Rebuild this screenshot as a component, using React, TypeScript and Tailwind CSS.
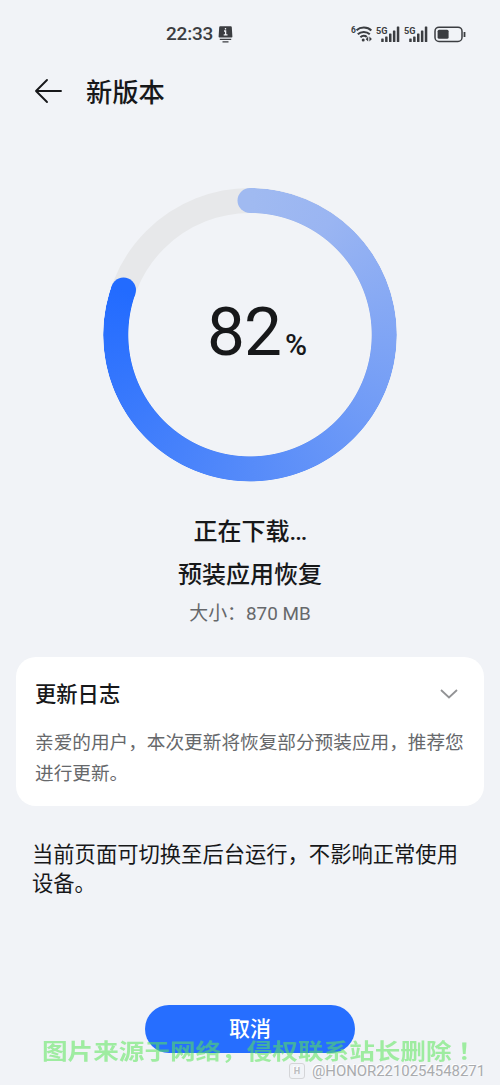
import React from "react";

const PROGRESS = 82;

function ProgressRing() {
  return (
    <div className="grid col-start-1 row-start-1 w-[294px] h-[294px]">
      <svg className="col-start-1 row-start-1 w-[294px] h-[294px]" viewBox="0 0 294 294" fill="none">
        <circle cx="147" cy="146.7" r="134.2" stroke="#e7e8ea" strokeWidth="25" />
      </svg>
      <div className="col-start-1 row-start-1 w-[294px] h-[294px] rounded-full bg-[conic-gradient(#a0baf1_0deg,#9ab5f2_35deg,#226bff_289.5deg,transparent_289.6deg)] [mask:radial-gradient(circle_at_147px_146.7px,transparent_121.3px,#000_122.1px,#000_146.3px,transparent_147.1px)]" />
      <svg className="col-start-1 row-start-1 w-[294px] h-[294px]" viewBox="0 0 294 294" fill="none">
        <circle cx="147" cy="12.5" r="12.5" fill="#a0baf1" />
        <circle cx="20.5" cy="102" r="12.5" fill="#226bff" />
      </svg>
    </div>
  );
}

function Signal() {
  return (
    <svg className="w-6 h-[17px]" viewBox="0 0 24 17" fill="#3b3d41">
      <text x="0" y="8" fontSize="9.8" fontWeight="700" fontFamily="Roboto, sans-serif" textLength="11.5" lengthAdjust="spacingAndGlyphs">5G</text>
      <rect x="5.2" y="12.5" width="2.5" height="3.5" rx="0.6" />
      <rect x="9.1" y="10.5" width="2.5" height="5.5" rx="0.6" />
      <rect x="13" y="7.5" width="2.5" height="8.5" rx="0.6" />
      <rect x="16.9" y="4.5" width="2.5" height="11.5" rx="0.6" />
      <rect x="20.8" y="0.5" width="2.5" height="15.5" rx="0.6" />
    </svg>
  );
}

function StatusBar() {
  return (
    <div className="h-[68px] pl-[166px] pr-[33px] flex items-center text-[#3b3d41]">
      <span className="font-[Roboto] font-medium text-[19px] leading-6 tracking-[-0.2px] pb-px">22:33</span>
      <svg className="w-[15px] h-[17px] ml-[5px]" viewBox="0 0 15 17" fill="none">
        <path d="M2.2 0.3h10.6a1 1 0 0 1 1 .9l.6 9.5a.8.8 0 0 1-.8.8H1.4a.8.8 0 0 1-.8-.8l.6-9.5a1 1 0 0 1 1-.9z" fill="#3b3d41" />
        <path d="M7.5 2v1.6M6 5h1.6v3.8M5.7 8.9h3.8" stroke="#f1f3f7" strokeWidth="1.3" />
        <path d="M1.8 13.3h11.4M4.5 15.8h6" stroke="#3b3d41" strokeWidth="1.2" />
      </svg>
      <div className="ml-auto flex items-center">
        <svg className="w-[22px] h-[18px] mr-[3px]" viewBox="0 0 22 18" fill="none" stroke="#3b3d41">
          <text x="0" y="7.5" fontSize="8.5" fontWeight="700" fontFamily="Roboto, sans-serif" fill="#3b3d41" stroke="none">6</text>
          <path d="M5.5 5.2C9.5 1.7 16.5 1.7 20.3 5.5M6.8 9.2c3.2-3.1 8.8-3.1 12 .1M9.4 12.2c1.9-1.7 4.7-1.8 6.4-.2" strokeWidth="2" />
          <circle cx="12.2" cy="15" r="1.5" fill="#3b3d41" stroke="none" />
          <path d="M17.2 11.5v5l-2.5-2.2zM18.4 11.5v5l2.5-2.6z" fill="#3b3d41" stroke="none" />
        </svg>
        <Signal />
        <div className="w-1" />
        <Signal />
        <svg className="w-[33px] h-[17px] ml-[6px]" viewBox="0 0 33 17" fill="none">
          <rect x="1" y="1.2" width="27" height="14.2" rx="4" stroke="#3b3d41" strokeWidth="1.5" />
          <rect x="3.6" y="3.8" width="11" height="9" rx="1.5" fill="#3b3d41" />
          <path d="M30.5 6v5" stroke="#3b3d41" strokeWidth="1.8" />
        </svg>
      </div>
    </div>
  );
}

export default function App() {
  return (
    <div className="relative w-[500px] h-[1085px] overflow-hidden bg-[#f1f3f7] font-[Roboto,'Noto_Sans_CJK_SC',sans-serif] text-[#17181a] flex flex-col">
      <StatusBar />

      <header className="h-12 pl-[34px] flex items-center">
        <svg className="w-7 h-[26px] mb-[2px]" viewBox="0 0 28 26" fill="none" stroke="#17181a" strokeWidth="1.9" strokeLinecap="round" strokeLinejoin="round">
          <path d="M13 2L2 13l11 11M2 13h25" />
        </svg>
        <h1 className="ml-6 pt-[2px] text-[26.3px] leading-10 font-medium">新版本</h1>
      </header>

      <main className="flex flex-col items-center mt-[72px]">
        <div className="grid place-items-center w-[294px] h-[294px]">
          <ProgressRing />
          <div className="col-start-1 row-start-1 flex items-baseline pl-[14px] pb-[7px]">
            <span className="text-[67.5px] leading-[76px] tracking-[-1px]">{PROGRESS}</span>
            <span className="ml-1 text-[30px] leading-8 font-medium">%</span>
          </div>
        </div>
        <p className="mt-8 text-[24px] leading-9 font-medium">
          正在下载<span className="tracking-[-1px]">...</span>
        </p>
        <p className="mt-[7px] text-[24px] leading-9 font-medium">预装应用恢复</p>
        <p className="mt-[7px] text-[18.9px] leading-7 text-[#66686b]">大小：870 MB</p>
      </main>

      <section className="mt-[29px] mx-4 h-[149px] shrink-0 rounded-[20px] bg-white pl-[19px] pr-[18px] pt-[22px]">
        <div className="flex items-center justify-between pr-2">
          <h2 className="text-[21.3px] leading-8 font-medium">更新日志</h2>
          <svg className="w-[18px] h-[10px] mb-[2px]" viewBox="0 0 18 10" fill="none" stroke="#929395" strokeWidth="1.8">
            <path d="M1 1l8 7.5L17 1" />
          </svg>
        </div>
        <p className="mt-[17px] w-[432px] text-[18.65px] leading-[31px] text-[#66686b]">
          亲爱的用户，本次更新将恢复部分预装应用，推荐您进行更新。
        </p>
      </section>

      <p className="mt-[35px] ml-8 w-[432px] text-[21.3px] leading-[28.5px]">
        当前页面可切换至后台运行，不影响正常使用设备。
      </p>

      <button className="mt-auto mb-8 mx-auto w-[210px] h-12 pt-[2px] shrink-0 rounded-full bg-[#266eff] text-white text-[21px] font-medium">
        取消
      </button>

      <div className="absolute left-[42px] top-[1032px] origin-center scale-y-[0.85] whitespace-nowrap text-[25.6px] leading-9 font-bold text-[#5ae65a]/55">
        图片来源于网络，侵权联系站长删除<span className="font-['Noto_Sans_CJK_TC',sans-serif]" lang="zh-TW">！</span>
      </div>

      <div className="absolute right-[15px] top-[1062px] flex items-center gap-[7px] text-[#a9abae] [text-shadow:-1px_-1px_0_#fff]">
        <span className="w-4 h-4 rounded-[3px] border border-[#d4d5d8] flex items-center justify-center text-[9px] leading-none font-bold text-[#bbbcbf]">H</span>
        <span className="text-[14.9px] leading-[18px]">@HONOR2210254548271</span>
      </div>
    </div>
  );
}
